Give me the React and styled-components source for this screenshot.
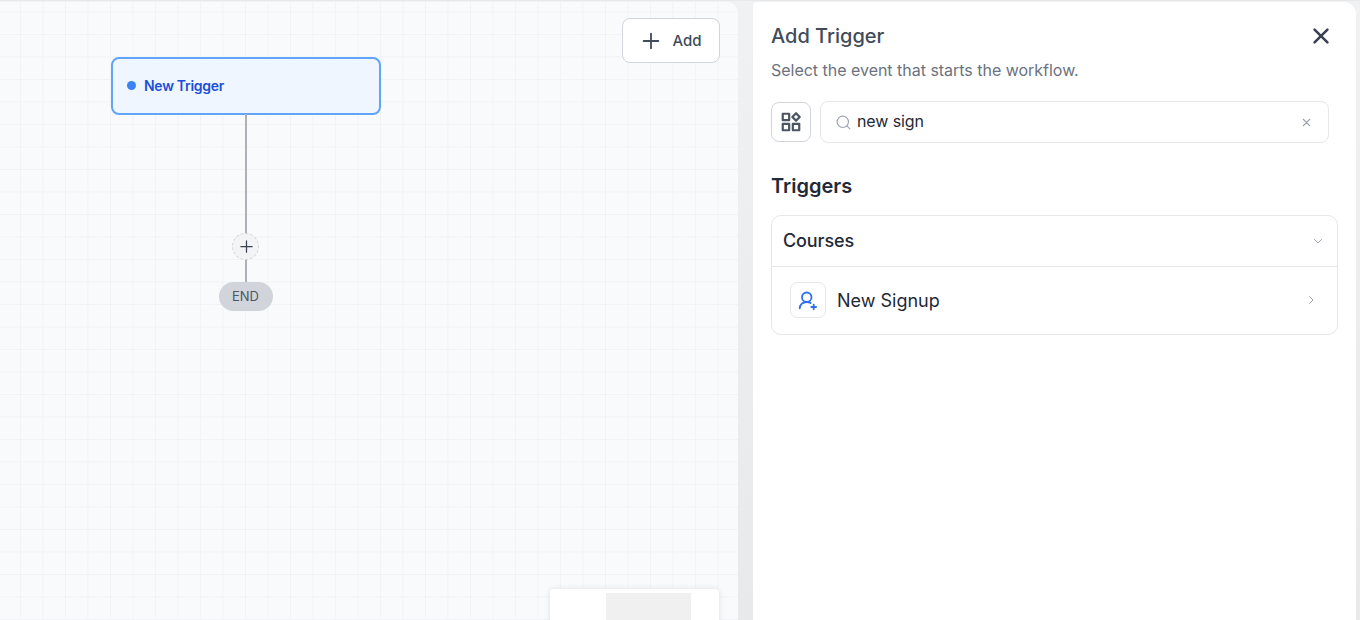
import React from "react";
import styled, { createGlobalStyle } from "styled-components";

const Global = createGlobalStyle`
  html, body { margin: 0; padding: 0; height: 100%; overflow: hidden; }
  body { font-family: Inter, "Liberation Sans", sans-serif; background: #e9eaec; }
  * { box-sizing: border-box; }
`;

const Page = styled.div`
  display: flex;
  width: 1360px;
  height: 620px;
  padding: 1px 4px 0 0;
  gap: 15px;
  overflow: hidden;
  border-top: 1px solid #e7e8ea;
  background: linear-gradient(to bottom, #f0f1f3, #e8e9eb);
`;

const Canvas = styled.main`
  position: relative;
  width: 738px;
  height: 640px;
  flex: none;
  overflow: hidden;
  border-top-right-radius: 10px;
  background-color: #f9fafc;
  background-image:
    linear-gradient(to right, #f2f3f6 1px, transparent 1px),
    linear-gradient(to bottom, #f2f3f6 1px, transparent 1px);
  background-size: 22.5px 22.5px;
  background-position: 20px 9.5px;
`;

const TriggerNode = styled.div`
  position: absolute;
  left: 111px;
  top: 55px;
  width: 270px;
  height: 58px;
  display: flex;
  align-items: center;
  gap: 8px;
  padding: 0 14px 1px;
  border: 2px solid #60a5fa;
  border-radius: 8px;
  background: #eff6ff;
  color: #1d4ed8;
  font-size: 14px;
  font-weight: 600;
  letter-spacing: -0.28px;
`;

const Dot = styled.span`
  width: 9px;
  height: 9px;
  border-radius: 50%;
  background: #3b82f6;
`;

const Connector = styled.div`
  position: absolute;
  left: ${(p) => p.$x}px;
  top: ${(p) => p.$y}px;
  width: 2px;
  height: ${(p) => p.$h}px;
  background: #adb0b6;
`;

const PlusNode = styled.div`
  position: absolute;
  left: 232px;
  top: 231px;
  width: 27px;
  height: 27px;
  display: flex;
  align-items: center;
  justify-content: center;
  padding-left: 1px;
  border: 1px dashed #d1d5db;
  border-radius: 50%;
  background: #f3f4f6;
  color: #374151;
`;

const EndNode = styled.div`
  position: absolute;
  left: 219px;
  top: 280px;
  width: 54px;
  height: 29px;
  display: flex;
  align-items: center;
  justify-content: center;
  padding: 0 1px 1px 0;
  border-radius: 15px;
  background: #d1d5db;
  color: #4b5563;
  font-size: 13px;
`;

const AddButton = styled.button`
  position: absolute;
  left: 622px;
  top: 16px;
  width: 98px;
  height: 45px;
  display: flex;
  align-items: center;
  justify-content: center;
  gap: 10px;
  padding: 0;
  border: 1px solid #d1d5db;
  border-radius: 8px;
  background: #fff;
  color: #414b5a;
  font-family: inherit;
  font-size: 15px;
  font-weight: 500;
`;

const MiniMap = styled.div`
  position: absolute;
  left: 550px;
  top: 587px;
  width: 169px;
  height: 60px;
  padding: 4px 0 0 56px;
  border-radius: 4px;
  background: #fff;
  box-shadow: 0 0 6px rgba(0, 0, 0, 0.1);
`;

const MiniMapView = styled.div`
  width: 85px;
  height: 40px;
  background: #f0f0f0;
`;

const Panel = styled.aside`
  flex: 1;
  height: 640px;
  padding: 16px 18px 0;
  border-top-right-radius: 12px;
  border-top-left-radius: 4px;
  background: #fff;
`;

const TitleRow = styled.div`
  display: flex;
  align-items: center;
  justify-content: space-between;
  height: 36px;
  padding-right: 6px;
`;

const Title = styled.h2`
  margin: 0;
  color: #414b5a;
  font-size: 20px;
  font-weight: 500;
  line-height: 36px;
`;

const CloseButton = styled.button`
  display: flex;
  padding: 0;
  border: 0;
  background: none;
  color: #374151;
`;

const Subtitle = styled.p`
  margin: 5px 0 0;
  color: #6b7280;
  font-size: 16px;
  line-height: 22px;
  letter-spacing: -0.02px;
`;

const SearchRow = styled.div`
  display: flex;
  align-items: center;
  gap: 9px;
  margin-top: 20px;
  padding-right: 9px;
`;

const FilterButton = styled.button`
  display: flex;
  align-items: center;
  justify-content: center;
  width: 40px;
  height: 40px;
  flex: none;
  padding: 0;
  border: 1px solid #d1d5db;
  border-radius: 8px;
  background: #fff;
  color: #4b5563;
`;

const SearchBox = styled.div`
  flex: 1;
  height: 42px;
  display: flex;
  align-items: center;
  gap: 5px;
  padding: 0 15px 0 14px;
  border: 1px solid #e5e7eb;
  border-radius: 8px;
  color: #9ca3af;
`;

const SearchText = styled.span`
  flex: 1;
  margin-bottom: 2px;
  color: #1f2937;
  font-size: 16px;
  letter-spacing: -0.1px;
`;

const SectionTitle = styled.h3`
  margin: 30px 0 0;
  color: #1f2937;
  font-size: 20px;
  font-weight: 600;
  line-height: 26px;
`;

const Group = styled.section`
  margin-top: 16px;
  border: 1px solid #e5e7eb;
  border-radius: 10px;
`;

const GroupHeader = styled.div`
  height: 51px;
  display: flex;
  align-items: center;
  justify-content: space-between;
  padding: 0 13px 1px 11px;
  border-bottom: 1px solid #e5e7eb;
  color: #1f2937;
  font-size: 18px;
  font-weight: 500;
  letter-spacing: -0.1px;
`;

const Chevron = styled.span`
  display: flex;
  color: #9ca3af;
`;

const Row = styled.div`
  height: 67px;
  display: flex;
  align-items: center;
  gap: 11px;
  padding: 0 20px 2px 18px;
  color: #1f2937;
  font-size: 18px;
`;

const RowIcon = styled.span`
  width: 36px;
  height: 36px;
  display: flex;
  align-items: center;
  justify-content: center;
  border: 1px solid #e5e7eb;
  border-radius: 7px;
  color: #2f6fed;
`;

const RowLabel = styled.span`
  flex: 1;
  padding-top: 2px;
`;

const Icon = ({ size = 24, width = 2, children }) => (
  <svg width={size} height={size} viewBox="0 0 24 24" fill="none" stroke="currentColor" strokeWidth={width} strokeLinecap="round" strokeLinejoin="round">
    {children}
  </svg>
);

export default function App() {
  return (
    <>
      <Global />
      <Page>
        <Canvas>
          <TriggerNode><Dot />New Trigger</TriggerNode>
          <Connector $x={245} $y={112} $h={120} />
          <PlusNode>
            <Icon size={15} width={2}><path d="M12 3v18M3 12h18" /></Icon>
          </PlusNode>
          <Connector $x={245} $y={258} $h={23} />
          <EndNode>END</EndNode>
          <AddButton>
            <Icon size={22} width={2}><path d="M12 4v16M4 12h16" /></Icon>
            Add
          </AddButton>
          <MiniMap><MiniMapView /></MiniMap>
        </Canvas>
        <Panel>
          <TitleRow>
            <Title>Add Trigger</Title>
            <CloseButton>
              <Icon size={22} width={2.8}><path d="M5 5l14 14M19 5L5 19" /></Icon>
            </CloseButton>
          </TitleRow>
          <Subtitle>Select the event that starts the workflow.</Subtitle>
          <SearchRow>
            <FilterButton>
              <Icon size={22} width={2.4}>
                <rect x="3" y="3" width="7" height="7" />
                <rect x="3" y="14" width="7" height="7" />
                <rect x="14" y="14" width="7" height="7" />
                <path d="M17.5 2.5l4 4-4 4-4-4z" />
              </Icon>
            </FilterButton>
            <SearchBox>
              <Icon size={17} width={1.6}><circle cx="11" cy="11" r="8" /><path d="M21 21l-4.3-4.3" /></Icon>
              <SearchText>new sign</SearchText>
              <Icon size={13} width={2}><path d="M6 6l12 12M18 6L6 18" /></Icon>
            </SearchBox>
          </SearchRow>
          <SectionTitle>Triggers</SectionTitle>
          <Group>
            <GroupHeader>
              Courses
              <Chevron><Icon size={12} width={2}><path d="M5 9l7 7 7-7" /></Icon></Chevron>
            </GroupHeader>
            <Row>
              <RowIcon>
                <Icon size={22} width={2}>
                  <circle cx="10.6" cy="9" r="5.2" />
                  <path d="M3 21c0-3.8 2.8-6.8 7.6-6.8 1.6 0 3 .3 4.2 1M18.2 17v5.2M15.6 19.6h5.2" />
                </Icon>
              </RowIcon>
              <RowLabel>New Signup</RowLabel>
              <Chevron><Icon size={12} width={2}><path d="M9 5l7 7-7 7" /></Icon></Chevron>
            </Row>
          </Group>
        </Panel>
      </Page>
    </>
  );
}
